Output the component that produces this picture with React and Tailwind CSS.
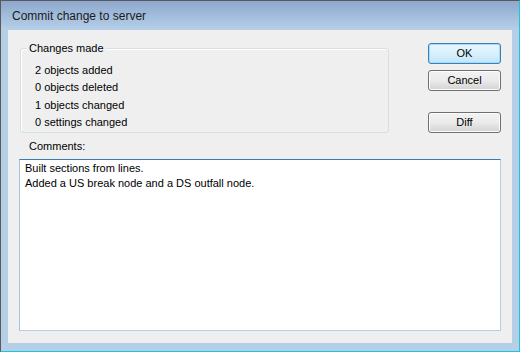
import React from "react";

const changes = [
  "2 objects added",
  "0 objects deleted",
  "1 objects changed",
  "0 settings changed",
];

function DlgButton({ label, primary, className = "" }) {
  return (
    <button
      className={`h-[21px] w-[73px] rounded-[3px] border text-[11px] leading-none text-black ${
        primary
          ? "border-[#3c7fb1] bg-gradient-to-b from-[#eaf6fd] via-[#d9f0fc] to-[#bee6fd] shadow-[inset_0_0_0_1px_#a6dbf7]"
          : "border-[#707070] bg-gradient-to-b from-[#f2f2f2] via-[#ebebeb] to-[#d3d3d3] shadow-[inset_0_0_0_1px_#fcfcfc]"
      } ${className}`}
    >
      {label}
    </button>
  );
}

export default function App() {
  return (
    <div
      className="flex h-[352px] w-[520px] flex-col border-t border-l border-r border-b border-t-[#5a5a5a] border-l-[#5a5a5a] border-r-[#19c7dc] border-b-[#19c7dc] bg-[#b5cfe7] text-black"
      style={{ fontFamily: '"Liberation Sans", Arial, sans-serif' }}
    >
      {/* Title bar */}
      <div className="flex h-[29px] items-center bg-gradient-to-b from-[#8ea8ce] to-[#b6d0e9] pl-[11px] text-[12px] text-[#1a1a1a]">
        Commit change to server
      </div>

      {/* Client area */}
      <div className="mx-[7px] flex h-[313px] flex-col bg-[#efefef] px-[11px]">
        <div className="flex items-start">
          {/* Group box */}
          <div className="relative ml-px mt-[18px] h-[85px] w-[369px] rounded-[3px] border border-[#d5dfe5] pl-[14px] pt-[13px] shadow-[inset_1px_1px_0_#ffffff]">
            <span className="absolute -top-[8px] left-[6px] bg-[#efefef] px-[2px] text-[11px] leading-[14px]">
              Changes made
            </span>
            {changes.map((c) => (
              <div key={c} className="text-[11px] leading-[17.3px]">
                {c}
              </div>
            ))}
          </div>

          {/* Buttons */}
          <div className="ml-auto mt-[13px] flex flex-col">
            <DlgButton label="OK" primary />
            <DlgButton label="Cancel" className="mt-[6px]" />
            <DlgButton label="Diff" className="mt-[21px]" />
          </div>
        </div>

        <div className="mt-[6px] pl-[10px] text-[11px] leading-[14px]">Comments:</div>

        <div className="mt-[6px] h-[172px] w-[482px] border border-t-[#3d7bad] border-r-[#b5cfe7] border-b-[#b5cfe7] border-l-[#a4c3de] bg-white px-[5px] pt-[1px] text-[11px] leading-[15px]">
          <div>Built sections from lines.</div>
          <div>Added a US break node and a DS outfall node.</div>
        </div>
      </div>
    </div>
  );
}
